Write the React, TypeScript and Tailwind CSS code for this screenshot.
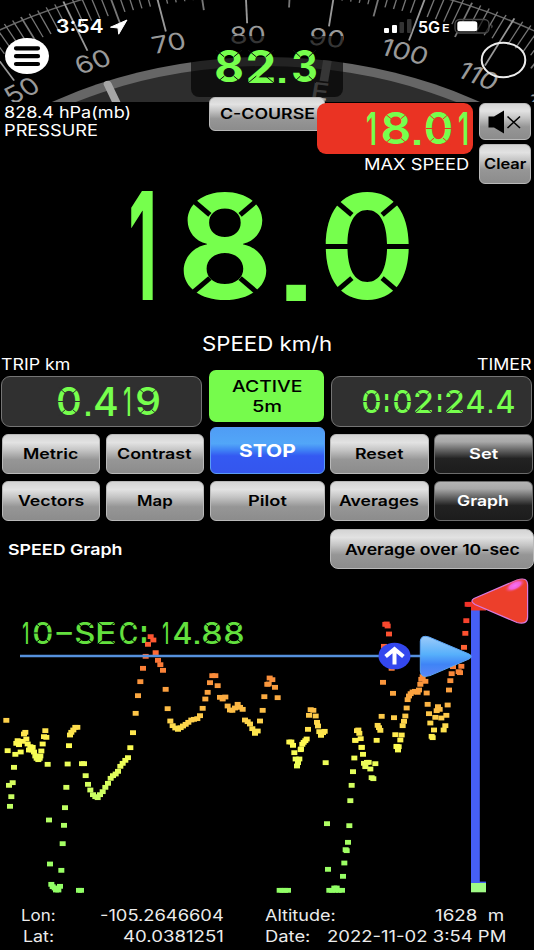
import React, { useLayoutEffect, useRef, useState } from "react";

const FONT = 'font-["Inter","Liberation_Sans",sans-serif]';

/* Text stretched horizontally to fill the width of its box. */
function Fit({ className = "", children }: { className?: string; children: string }) {
  const box = useRef<HTMLSpanElement>(null);
  const inner = useRef<HTMLSpanElement>(null);
  const [k, setK] = useState(1);
  useLayoutEffect(() => {
    if (box.current && inner.current) setK(box.current.offsetWidth / inner.current.offsetWidth);
  }, [children]);
  return (
    <span ref={box} className={`block shrink-0 whitespace-pre text-left leading-none ${className}`}>
      <span ref={inner} className="inline-block origin-left" style={{ transform: `scaleX(${k})` }}>
        {children}
      </span>
    </span>
  );
}

type Cell = [char: string, width: number, gap: number];

const SLIT_CHARS = "02389SEC";
const LINE = 76;

function Glyph({ cell, height, weight, slit }: { cell: Cell; height: number; weight: number; slit: string }) {
  const [ch, width, gap] = cell;
  const [t, setT] = useState("none");
  const low = ch === ".";
  const colon = ch === ":";
  const dash = ch === "-";
  const h = low ? height * 0.15 : colon ? height * 0.75 : dash ? height * 0.13 : height;
  const top = low ? height - h : colon ? height * 0.22 : dash ? height * 0.43 : 0;
  const dotty = low || colon;
  useLayoutEffect(() => {
    const c = document.createElement("canvas").getContext("2d");
    if (!c) return;
    c.font = dotty ? 'bold 100px "DejaVu Sans"' : `${weight} 100px Inter`;
    const m = c.measureText(ch);
    const sx = width / (m.actualBoundingBoxRight + m.actualBoundingBoxLeft);
    const sy = h / (m.actualBoundingBoxAscent + m.actualBoundingBoxDescent);
    const base = (LINE - m.fontBoundingBoxAscent - m.fontBoundingBoxDescent) / 2 + m.fontBoundingBoxAscent;
    const x = m.actualBoundingBoxLeft * sx;
    const y = top - (base - m.actualBoundingBoxAscent) * sy;
    setT(`translate(${x}px, ${y}px) scale(${sx}, ${sy})`);
  }, [ch, width, h, top, weight, dotty]);
  return (
    <span className="relative block shrink-0" style={{ width, height, marginLeft: gap }}>
      <span
        className={`absolute left-0 top-0 block origin-top-left whitespace-pre text-[100px] leading-[76px] ${
          dotty ? 'font-["DejaVu_Sans",sans-serif]' : FONT
        }`}
        style={{ transform: t, fontWeight: dotty ? 700 : weight }}
      >
        {ch}
      </span>
      {SLIT_CHARS.includes(ch) && (
        <svg
          viewBox="0 0 100 100"
          preserveAspectRatio="none"
          className={`absolute inset-0 h-full w-full ${slit}`}
          fill="none"
          strokeWidth={height > 60 ? 5 : 1}
        >
          <line x1="0" y1="0" x2="32" y2="21" vectorEffect="non-scaling-stroke" />
          <line x1="100" y1="0" x2="68" y2="21" vectorEffect="non-scaling-stroke" />
          <line x1="0" y1="100" x2="32" y2="79" vectorEffect="non-scaling-stroke" />
          <line x1="100" y1="100" x2="68" y2="79" vectorEffect="non-scaling-stroke" />
          {ch === "0" && (
            <>
              <line x1="0" y1="50" x2="28" y2="50" vectorEffect="non-scaling-stroke" />
              <line x1="72" y1="50" x2="100" y2="50" vectorEffect="non-scaling-stroke" />
            </>
          )}
        </svg>
      )}
    </span>
  );
}

function Lcd({
  cells,
  height,
  weight,
  slit = "stroke-black",
  className = "text-[#76ff4d]",
}: {
  cells: Cell[];
  height: number;
  weight: number;
  slit?: string;
  className?: string;
}) {
  return (
    <span className={`flex w-max ${className}`}>
      {cells.map((c, i) => (
        <Glyph key={i} cell={c} height={height} weight={weight} slit={slit} />
      ))}
    </span>
  );
}

const TONES = {
  light: "border-[#b9b9b9] bg-[linear-gradient(180deg,#d4d4d4_0%,#e2e2e2_20%,#c4c4c4_40%,#969696_65%,#8c8c8c_100%)] text-black",
  dark: "border-[#6b6b6b] bg-[linear-gradient(180deg,#b4b4b4_0%,#a8a8a8_18%,#6a6a6a_38%,#222_62%,#1c1c1c_100%)] text-white",
  blue: "border-[#5a9bf5] bg-[linear-gradient(180deg,#4f9df5_0%,#52a6f8_35%,#3e7ff5_50%,#3459f2_62%,#3456ee_100%)] text-white",
};

function Btn({
  tone = "light",
  className = "",
  children,
}: {
  tone?: keyof typeof TONES;
  className?: string;
  children: React.ReactNode;
}) {
  return (
    <button className={`flex shrink-0 items-center justify-center rounded-[6px] border ${TONES[tone]} ${className}`}>
      {children}
    </button>
  );
}

/* Compass dial, drawn as a circle and widened 1.23 times. */
const HEADING = 82.3;
const LABELS = [50, 60, 70, 80, 90, 100, 110, 120];
const turn = (d: number) => `rotate(${(d - HEADING) * 0.972})`;

function Compass() {
  const ticks = Array.from({ length: 80 }, (_, i) => 43 + i);
  return (
    <svg className="block h-[102px] w-[534px]" viewBox="0 0 534 102">
      <g transform="translate(266 416) scale(1.23 1)">
        <circle r="442.5" fill="none" stroke="#6a6a6a" strokeWidth="1.4" />
        {ticks.map((d) => (
          <line
            key={d}
            x1="0"
            x2="0"
            y1="-446"
            y2={d % 10 === 0 ? -393 : d % 5 === 0 ? -409 : -420}
            stroke={d % 10 === 0 ? "#999" : "#777"}
            strokeWidth={d % 5 === 0 ? 1.5 : 1.1}
            transform={turn(d)}
          />
        ))}
        <circle r="359" fill="#666" />
        <circle r="350" fill="#2d2d2d" />
        <path d="M0 -356V-326" stroke="#a6a6a6" strokeWidth="6.5" strokeLinecap="round" transform="rotate(-21.2)" />
        <path d="M0 -359V-338" stroke="#9a9a9a" strokeWidth="7" transform="rotate(8)" />
        <text
          y="-319"
          textAnchor="middle"
          fontSize="24"
          fill="#aaa"
          className='font-["Inter"] font-medium'
          transform="rotate(7.7)"
        >
          E
        </text>
        {LABELS.map((n) => (
          <text
            key={n}
            y="-373"
            textAnchor="middle"
            fontSize="23.5"
            fill="#999"
            className='font-["Inter"]'
            transform={turn(n)}
          >
            {n}
          </text>
        ))}
      </g>
    </svg>
  );
}

/* Samples of the speed trace: [x, y] in thirds of a pixel from each block's origin. */
const TRACE: { ox: number; oy: number; pts: number[] }[] = [
  {
    ox: 0,
    oy: 700,
    pts: [
      19, 61, 23, 152, 46, 163, 42, 202, 38, 248, 27, 256, 34, 290, 30, 319, 49, 130, 53, 122, 57, 134, 62, 156, 68, 124,
      72, 102, 76, 97, 79, 117, 83, 132, 87, 150, 91, 140, 95, 150, 98, 142, 102, 156, 106, 168, 110, 175, 115, 179, 119,
      175, 121, 168, 124, 153, 128, 132, 132, 110, 136, 92, 139, 112, 143, 193, 147, 360, 150, 492, 154, 553, 158, 560,
      164, 564, 168, 570, 175, 570, 180, 559, 184, 511, 188, 431, 192, 376, 195, 323, 199, 262, 203, 192, 207, 137, 210,
      105, 214, 97, 220, 90, 226, 82, 232, 82, 237, 571, 243, 571, 246, 191, 252, 191, 257, 227, 264, 253, 271, 270, 279,
      284, 286, 290, 293, 293, 300, 284, 308, 275, 316, 262, 324, 250, 332, 235, 339, 227, 347, 222, 354, 214, 361, 199,
      368, 190, 376, 181, 384, 173, 391, 143, 399, 98, 407, 40, 503, 26, 511, 63, 518, 77, 526, 84, 534, 88, 542, 83,
      549, 78, 557, 73, 565, 67, 574, 60, 582, 58, 592, 56, 600, 47, 608, 25, 683, 18, 690, 30, 697, 31, 705, 24, 713,
      13, 720, 22, 728, 28, 735, 60, 743, 65, 750, 72, 757, 86, 765, 100, 773, 93, 780, 63, 788, 31,
    ],
  },
  {
    ox: 0,
    oy: 530,
    pts: [
      414, 497, 421, 455, 429, 415, 437, 379, 444, 343, 452, 320, 460, 330, 467, 368, 474, 391, 481, 404, 489, 421, 497,
      478, 616, 507, 623, 487, 630, 458, 637, 437, 646, 437, 653, 467, 660, 502, 668, 507, 676, 501, 793, 500, 802, 463,
    ],
  },
  {
    ox: 267,
    oy: 570,
    pts: [
      5, 342, 8, 324, 16, 329, 24, 352, 32, 383, 126, 436, 131, 419, 139, 421, 146, 438, 150, 457, 153, 468, 123, 478,
      157, 485, 162, 496, 168, 488, 173, 484, 119, 507, 115, 512, 110, 517, 106, 523, 102, 537, 67, 516, 73, 516, 78,
      526, 265, 511, 270, 482, 274, 480, 277, 490, 281, 506, 284, 532, 329, 511, 332, 466, 336, 473, 340, 481, 344, 439,
      348, 337, 351, 229, 355, 163, 359, 162, 362, 168, 366, 192, 374, 295, 378, 370, 381, 443, 385, 494, 389, 530, 395,
      530, 400, 510, 404, 495, 407, 467, 411, 454, 415, 438, 419, 414, 422, 389, 426, 378, 431, 371, 437, 366, 444, 364,
      452, 367, 456, 360, 460, 343, 463, 328, 467, 320, 475, 334, 479, 369, 482, 403, 486, 431, 490, 459, 494, 499, 497,
      503, 501, 480, 505, 442, 509, 422, 513, 410, 518, 418, 523, 444, 530, 480, 535, 467, 538, 436, 542, 405, 546, 360,
      550, 332, 554, 311, 558, 290, 575, 305, 579, 308, 583, 289, 591, 232, 595, 190, 598, 152, 602, 103, 607, 103,
    ],
  },
  {
    ox: 267,
    oy: 700,
    pts: [
      82, 158, 86, 177, 90, 198, 93, 188, 97, 177, 101, 149, 38, 571, 46, 571, 54, 571, 63, 571, 176, 188, 180, 371, 183,
      508, 187, 571, 195, 571, 202, 564, 209, 564, 205, 571, 215, 571, 225, 571, 228, 529, 232, 489, 236, 449, 239, 452,
      243, 427, 247, 377, 250, 302, 254, 256, 258, 215, 262, 174, 265, 121, 284, 142, 288, 163, 291, 190, 295, 200, 300,
      187, 305, 187, 310, 207, 314, 233, 319, 236, 325, 191, 389, 139, 393, 150,
    ],
  },
];

const STOPS: [number, number[]][] = [
  [600, [240, 45, 40]],
  [640, [255, 88, 50]],
  [675, [250, 138, 58]],
  [705, [252, 182, 68]],
  [722, [254, 212, 76]],
  [745, [255, 252, 82]],
  [790, [208, 255, 98]],
  [830, [170, 255, 100]],
  [890, [145, 255, 102]],
];

function tint(y: number) {
  if (y <= STOPS[0][0]) return `rgb(${STOPS[0][1].join(",")})`;
  for (let i = 1; i < STOPS.length; i++) {
    const [y1, c1] = STOPS[i];
    const [y0, c0] = STOPS[i - 1];
    if (y <= y1) return `rgb(${c0.map((v, j) => Math.round(v + ((c1[j] - v) * (y - y0)) / (y1 - y0))).join(",")})`;
  }
  return `rgb(${STOPS[STOPS.length - 1][1].join(",")})`;
}

function Chart() {
  const dots: [number, number][] = [];
  TRACE.forEach(({ ox, oy, pts }) => {
    for (let i = 0; i < pts.length; i += 2) dots.push([ox + pts[i] / 3, oy + pts[i + 1] / 3]);
  });
  return (
    <svg className="absolute inset-0 h-[330px] w-[534px]" viewBox="0 570 534 330">
      <defs>
        <linearGradient id="play" x1="0" y1="0" x2="0" y2="1">
          <stop offset="0" stopColor="#9ccbfa" />
          <stop offset="0.45" stopColor="#57b0fb" />
          <stop offset="0.7" stopColor="#3f84f6" />
          <stop offset="1" stopColor="#5b86f7" />
        </linearGradient>
        <radialGradient id="shine">
          <stop offset="0" stopColor="#f573f5" />
          <stop offset="0.5" stopColor="#f35fd8" />
          <stop offset="1" stopColor="#ec3f2b" stopOpacity="0" />
        </radialGradient>
      </defs>
      {dots.map(([x, y], i) => (
        <rect key={i} x={x - 3} y={y - 2.4} width="6" height="4.8" fill={tint(y)} />
      ))}
      <path d="M20 656H472" stroke="#5590dc" strokeWidth="2.4" />
      <rect x="471" y="610" width="8.8" height="273" fill="#465ff5" />
      <rect x="471" y="881.6" width="15" height="1.4" fill="#465ff5" />
      <rect x="471" y="883" width="15" height="9.3" fill="#a0fa86" />
      <rect x="471" y="601.5" width="15" height="9" fill="#ee3526" />
      <path
        d="M474 598.5L517 580Q527.600 576.500 527.600 585V617Q527.600 625 517 622.500L475 604.500Q469.500 601 474 598.500Z"
        fill="#ec3f2b"
        stroke="#d77be0"
        strokeWidth="1.2"
      />
      <ellipse cx="515" cy="585.5" rx="12" ry="5.4" fill="url(#shine)" transform="rotate(-27 515 585.5)" />
      <path
        d="M420.300 641Q421 634.500 429 637L469 654Q473.500 656.500 469 659L430 675.600Q420.600 678.500 420.300 671Z"
        fill="url(#play)"
        stroke="#5aa4f5"
        strokeWidth="1"
      />
      <ellipse cx="394.500" cy="656" rx="16" ry="13.300" fill="#3347ee" />
      <path d="M394.500 664.500V649.500M385.600 656.500L394.500 649L403.400 656.500" fill="none" stroke="#fff" strokeWidth="4" />
    </svg>
  );
}

export default function App() {
  return (
    <div className={`relative flex h-[950px] w-[534px] flex-col overflow-hidden bg-black text-white ${FONT}`}>
      <header className="relative h-[102px] shrink-0">
        <Compass />
        <svg className="absolute left-[4px] top-[37px] h-[38px] w-[46px]" viewBox="0 0 46 38">
          <ellipse cx="23" cy="19" rx="22" ry="18" fill="#fff" />
          <path d="M12 11.300H34M12 19.200H34M12 27H34" stroke="#000" strokeWidth="4.200" strokeLinecap="round" />
        </svg>
        <Fit className="absolute left-[56px] top-[17px] w-[48px] text-[19px] font-semibold">3:54</Fit>
        <svg className="absolute left-[109px] top-[19px] h-[17px] w-[20px]" viewBox="0 0 20 17">
          <path d="M1.500 8.200L18 1L9.700 15.200L9 9Z" fill="#fff" stroke="#fff" strokeLinejoin="round" />
        </svg>
        <svg className="absolute left-[382px] top-[18px] h-[17px] w-[32px]" viewBox="0 0 32 17">
          <rect x="2" y="10" width="5" height="5" rx="1" fill="#fff" />
          <rect x="10" y="7" width="5" height="8" rx="1" fill="#fff" />
          <rect x="17.500" y="4" width="4.500" height="11" rx="1" fill="#333" />
          <rect x="25" y="1" width="4.500" height="14" rx="1" fill="#333" />
        </svg>
        <Fit className="absolute left-[418px] top-[19px] w-[22px] text-[16px] font-semibold">5G</Fit>
        <Fit className="absolute left-[442px] top-[23px] w-[8px] text-[11px] font-semibold">E</Fit>
        <svg className="absolute left-[453px] top-[18px] h-[18px] w-[42px]" viewBox="0 0 42 18">
          <rect x="2" y="1.500" width="34" height="13.500" rx="4.500" fill="#000" fillOpacity="0.6" stroke="#4a4a4a" strokeWidth="1.300" />
          <path d="M38.500 6V10.500Q40.500 8.300 38.500 6Z" fill="#777" />
          <rect x="4.300" y="3.200" width="20" height="10" rx="2.500" fill="#fff" />
        </svg>
        <svg className="absolute left-[479px] top-[40px] h-[40px] w-[49px]" viewBox="0 0 49 40">
          <ellipse cx="24.500" cy="20" rx="21.800" ry="17.200" fill="none" stroke="#ececec" strokeWidth="2" />
        </svg>
        <div className="absolute left-[191px] top-[36px] flex h-[61px] w-[152px] rounded-b-[8px] bg-black/65 pl-[25px] pt-[14px]">
          <Lcd height={33} weight={650} slit="stroke-[#111]" cells={[["8", 26, 0], ["2", 26, 6], [".", 6, 5], ["3", 23, 8]]} />
        </div>
      </header>

      <section className="relative flex h-[90px] shrink-0">
        <div className="flex w-[209px] flex-col pl-[4px] pt-[3px]">
          <Fit className="w-[127px] text-[15.500px]">828.4 hPa(mb)</Fit>
          <Fit className="mt-[2px] w-[94px] text-[15.500px]">PRESSURE</Fit>
        </div>
        <Btn className="-mt-[5px] h-[34px] w-[116px]">
          <Fit className="w-[95px] text-[14px] font-semibold">C-COURSE</Fit>
        </Btn>
        <div className="relative -ml-[8px] mt-[1px] flex w-[156px] flex-col">
          <div className="flex h-[51px] items-start justify-end rounded-[9px] bg-[#ea3323] pr-[6px] pt-[9px]">
            <Lcd
              height={33}
              weight={600}
              slit="stroke-[#ea3323]"
              cells={[["1", 8, 0], ["8", 26, 8], [".", 6, 5], ["0", 25, 6], ["1", 8, 8]]}
            />
          </div>
          <Fit className="ml-[47px] mt-[2px] w-[105px] text-[16px]">MAX SPEED</Fit>
        </div>
        <div className="ml-[6px] mt-px flex flex-col gap-[4px]">
          <Btn className="h-[37px] w-[52px]">
            <svg className="h-[26px] w-[36px]" viewBox="0 0 36 26">
              <path d="M1.500 7.500H7L17 1.500V24.500L7 18.500H1.500Z" fill="#000" />
              <path d="M20.500 7.500L33 19M33 7.500L20.500 19" stroke="#000" strokeWidth="1.500" />
            </svg>
          </Btn>
          <Btn className="h-[40px] w-[52px]">
            <Fit className="w-[42px] text-[14.500px] font-semibold">Clear</Fit>
          </Btn>
        </div>
      </section>

      <section className="h-[109px] shrink-0 pl-[131px]">
        <Lcd height={109} weight={680} cells={[["1", 22, 0], ["8", 84, 30], [".", 20, 19], ["0", 84, 19]]} />
      </section>

      <div className="flex h-[56px] shrink-0 justify-center pt-[33px]">
        <Fit className="w-[130px] text-[20px]">SPEED km/h</Fit>
      </div>

      <section className="flex h-[70px] shrink-0 gap-[7px] pl-[1px]">
        <div className="flex w-[201px] flex-col">
          <Fit className="w-[70px] text-[15.500px]">TRIP km</Fit>
          <div className="mt-[3px] flex h-[52px] rounded-[9px] border-[1.500px] border-[#757575] bg-[#303030] pl-[56px] pt-[10px]">
            <Lcd
              height={29}
              weight={500}
              slit="stroke-[#303030]"
              cells={[["0", 22, 0], [".", 4, 6], ["4", 22, 5], ["1", 6, 7], ["9", 22, 7]]}
            />
          </div>
        </div>
        <div className="mt-[13px] flex h-[52px] w-[115px] flex-col items-center rounded-[7px] bg-[#76fb4c] pt-[8px] text-black">
          <Fit className="w-[70px] text-[16px] font-medium">ACTIVE</Fit>
          <Fit className="mt-[4px] w-[30px] text-[16px] font-medium">5m</Fit>
        </div>
        <div className="flex w-[201px] flex-col">
          <Fit className="ml-[146px] w-[54px] text-[15.500px]">TIMER</Fit>
          <div className="mt-[3px] flex h-[52px] rounded-[9px] border-[1.500px] border-[#757575] bg-[#303030] pl-[31px] pt-[13px]">
            <Lcd
              height={23}
              weight={450}
              slit="stroke-[#303030]"
              cells={[
                ["0", 17, 0],
                [":", 3, 5],
                ["0", 17, 6],
                ["2", 17, 4],
                [":", 3, 6],
                ["2", 17, 5],
                ["4", 17, 4],
                [".", 3, 5],
                ["4", 17, 5],
              ]}
            />
          </div>
        </div>
      </section>

      <section className="grid shrink-0 grid-cols-[98.500px_98.500px_115px_98.500px_98.500px] items-end gap-x-[5.500px] gap-y-[7px] pl-[1.500px]">
        <Btn className="h-[40px]"><Fit className="w-[55px] text-[14.500px] font-semibold">Metric</Fit></Btn>
        <Btn className="h-[40px]"><Fit className="w-[75px] text-[14.500px] font-semibold">Contrast</Fit></Btn>
        <Btn tone="blue" className="h-[47px]"><Fit className="w-[57px] text-[18px] font-bold">STOP</Fit></Btn>
        <Btn className="h-[40px]"><Fit className="w-[49px] text-[14.500px] font-semibold">Reset</Fit></Btn>
        <Btn tone="dark" className="h-[40px]"><Fit className="w-[29px] text-[14.500px] font-semibold">Set</Fit></Btn>
        <Btn className="h-[40px]"><Fit className="w-[66px] text-[14.500px] font-semibold">Vectors</Fit></Btn>
        <Btn className="h-[40px]"><Fit className="w-[36px] text-[14.500px] font-semibold">Map</Fit></Btn>
        <Btn className="h-[40px]"><Fit className="w-[39px] text-[14.500px] font-semibold">Pilot</Fit></Btn>
        <Btn className="h-[40px]"><Fit className="w-[80px] text-[14.500px] font-semibold">Averages</Fit></Btn>
        <Btn tone="dark" className="h-[40px]"><Fit className="w-[52px] text-[14.500px] font-semibold">Graph</Fit></Btn>
      </section>

      <section className="flex h-[49px] shrink-0 items-start justify-between pl-[8px] pt-[8px]">
        <Fit className="mt-[13px] w-[114px] text-[15px] font-semibold">SPEED Graph</Fit>
        <Btn className="h-[40px] w-[204px] rounded-[8px]">
          <Fit className="w-[175px] text-[15px] font-semibold">Average over 10-sec</Fit>
        </Btn>
      </section>

      <section className="relative h-[330px] shrink-0 pl-[23px] pt-[52px]">
        <Lcd
          height={22}
          weight={550}
          className="text-[#63e03e]"
          cells={[
            ["1", 5, 0],
            ["0", 18, 6],
            ["-", 16, 4],
            ["S", 18, 4],
            ["E", 17, 4],
            ["C", 17, 5],
            [":", 4, 5],
            ["1", 5, 17],
            ["4", 17, 6],
            [".", 4, 4],
            ["8", 18, 4],
            ["8", 18, 4],
          ]}
        />
        <Chart />
      </section>

      <footer className="grid h-[50px] shrink-0 grid-cols-[224px_282px] gap-x-[41px] pt-[8px] text-[15.500px] text-[#ececec]">
        <div className="flex items-start justify-between pl-[21px]">
          <Fit className="w-[35px]">Lon:</Fit>
          <Fit className="w-[124px]">-105.2646604</Fit>
        </div>
        <div className="flex items-start justify-between pr-[43px]">
          <Fit className="w-[71px]">Altitude:</Fit>
          <Fit className="w-[69px]">1628  m</Fit>
        </div>
        <div className="flex items-start justify-between pl-[23px]">
          <Fit className="w-[31px]">Lat:</Fit>
          <Fit className="w-[101px]">40.0381251</Fit>
        </div>
        <div className="flex items-start pr-[41px]">
          <Fit className="w-[45px]">Date:</Fit>
          <Fit className="ml-[17px] w-[179px]">2022-11-02 3:54 PM</Fit>
        </div>
      </footer>
    </div>
  );
}
